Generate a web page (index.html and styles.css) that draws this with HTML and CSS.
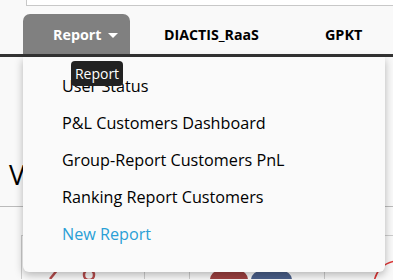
FILE: index.html
```html
<!DOCTYPE html>
<html>
<head>
<meta charset="utf-8">
<link rel="stylesheet" href="styles.css">
</head>
<body>
<div class="search"></div>
<nav class="nav">
  <div class="tab active">Report <span class="caret"></span></div>
  <div class="tab">DIACTIS_RaaS</div>
  <div class="tab">GPKT</div>
</nav>
<main class="main">
  <h1 class="title">V</h1>
  <div class="chart">
    <svg width="393" height="44" viewBox="0 0 393 44">
      <g stroke="#ccc" stroke-width="1">
        <line x1="21.5" y1="0" x2="21.5" y2="44"/>
        <line x1="21" y1="0.5" x2="393" y2="0.5"/>
        <line x1="144.5" y1="30" x2="144.5" y2="44"/>
        <line x1="189.5" y1="30" x2="189.5" y2="44"/>
        <line x1="234.5" y1="30" x2="234.5" y2="44"/>
        <line x1="279.5" y1="30" x2="279.5" y2="44"/>
        <line x1="324.5" y1="30" x2="324.5" y2="44"/>
      </g>
      <path d="M50 44 L58 34" stroke="#b54b4b" stroke-width="2.5" fill="none"/>
      <circle cx="89" cy="40" r="5" stroke="#b54b4b" stroke-width="2.5" fill="none"/>
      <rect x="210" y="35" width="38" height="20" rx="10" fill="#9d4040"/>
      <rect x="251" y="35" width="41" height="20" rx="12" fill="#4a5f8a"/>
      <circle cx="398" cy="50" r="24" stroke="#d33" stroke-width="1.5" fill="none"/>
    </svg>
  </div>
</main>
<div class="dropdown">
  <a class="item">User Status</a>
  <a class="item">P&amp;L Customers Dashboard</a>
  <a class="item">Group-Report Customers PnL</a>
  <a class="item">Ranking Report Customers</a>
  <a class="item new">New Report</a>
</div>
<div class="tooltip">Report</div>
</body>
</html>
```

FILE: styles.css
```css
html, body {
  margin: 0;
  padding: 0;
  background: #f9f9f9;
  font-family: "Open Sans", "Liberation Sans", sans-serif;
  width: 393px;
  height: 280px;
  overflow: hidden;
}
.search {
  margin-left: 26px;
  height: 5px;
  border-left: 1px solid #c8c8c8;
  border-bottom: 1px solid #c8c8c8;
  background: #fff;
}
.nav {
  display: flex;
  margin-top: 8px;
  padding-left: 23px;
  border-bottom: 3px solid #333;
  height: 40px;
}
.tab {
  display: flex;
  align-items: center;
  font-weight: 700;
  font-size: 14px;
  color: #000;
}
.tab.active {
  width: 107px;
  box-sizing: border-box;
  padding-left: 30px;
  background: #808080;
  color: #fff;
  border-radius: 7px 7px 0 0;
  gap: 7px;
  font-size: 14.3px;
}
.caret {
  width: 0;
  height: 0;
  border-left: 5px solid transparent;
  border-right: 5px solid transparent;
  border-top: 5px solid #fff;
  margin-top: 2px;
}
.tab:nth-child(2) {
  margin-left: 34px;
  font-size: 14.2px;
}
.tab:nth-child(3) {
  margin-left: 66px;
  font-size: 14.4px;
}
.title {
  margin: 0;
  padding: 102px 0 0 9px;
  font-weight: 400;
  font-size: 27px;
  line-height: 32px;
  color: #000;
  border-bottom: 1px solid #bbb;
  box-sizing: border-box;
  height: 150px;
}
.chart {
  margin-top: 28px;
}
.chart svg {
  display: block;
}
.dropdown {
  position: absolute;
  left: 23px;
  top: 57px;
  width: 362px;
  height: 215px;
  box-sizing: border-box;
  padding: 11px 0 0 39px;
  background: #fafafa;
  border-radius: 0 0 6px 6px;
  box-shadow: 0 3px 8px rgba(0,0,0,0.28);
  display: flex;
  flex-direction: column;
}
.item {
  font-size: 16.2px;
  line-height: 37px;
  color: #000;
}
.item.new {
  color: #2a9fd6;
}
.tooltip {
  position: absolute;
  left: 71px;
  top: 61px;
  width: 52px;
  height: 25px;
  box-sizing: border-box;
  background: #222;
  color: #fff;
  border-radius: 4px;
  font-size: 14px;
  line-height: 25px;
  text-align: center;
}
```
